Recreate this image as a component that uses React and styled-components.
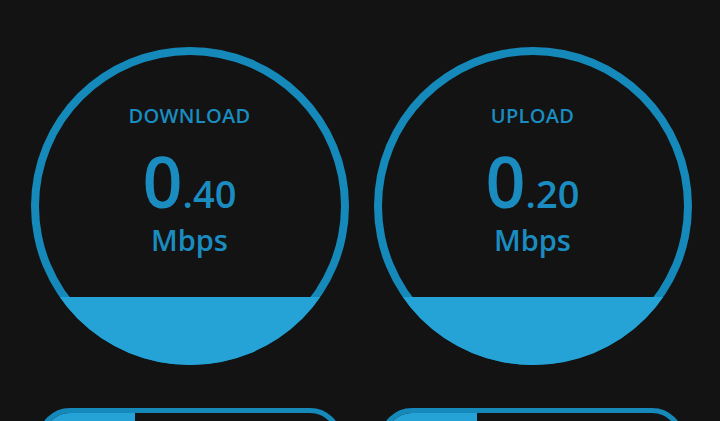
import styled, { createGlobalStyle } from "styled-components";

const GlobalStyle = createGlobalStyle`
  html, body {
    margin: 0;
    padding: 0;
    background: #131313;
  }
  body {
    font-family: "Open Sans", "Noto Sans", sans-serif;
    overflow: hidden;
  }
`;

const Page = styled.div`
  width: 720px;
  height: 421px;
  display: flex;
  flex-direction: column;
  align-items: center;
  gap: 43px;
  padding-top: 47px;
  box-sizing: border-box;
  overflow: hidden;
`;

const Row = styled.div`
  display: flex;
  gap: 25px;
  padding-left: 2px;
`;

const Gauge = styled.div`
  position: relative;
  width: 318px;
  height: 318px;
  border-radius: 50%;
  box-shadow: inset 0 0 0 8px #1689bb;
  overflow: hidden;
  display: flex;
  flex-direction: column;
  align-items: center;
`;

const Fill = styled.div`
  position: absolute;
  left: 0;
  right: 0;
  bottom: 0;
  background: #25a3d7;
`;

const Label = styled.div`
  margin-top: 57px;
  font-size: 20px;
  font-weight: 600;
  line-height: 24px;
  letter-spacing: 0.3px;
  color: #1a8cc0;
`;

const Value = styled.div`
  margin-top: 16px;
  height: 74px;
  display: flex;
  align-items: baseline;
  color: #1a8cc0;
  font-weight: 600;
  line-height: 74px;
`;

const Whole = styled.span`
  font-size: 70px;
`;

const Fraction = styled.span`
  font-size: 38px;
`;

const Unit = styled.div`
  margin-top: 4px;
  font-size: 29px;
  font-weight: 600;
  line-height: 36px;
  color: #1a8cc0;
`;

const Cards = styled.div`
  display: flex;
  gap: 38px;
  padding-left: 2px;
`;

const Card = styled.div`
  position: relative;
  width: 304px;
  height: 80px;
  box-sizing: border-box;
  border: 5px solid #1689bb;
  border-radius: 32px;
  background: #131313;
  overflow: hidden;
`;

const CardFill = styled.div`
  height: 100%;
  background: #25a3d7;
`;

const gauges = [
  { label: "DOWNLOAD", whole: "0", fraction: ".40", fill: 68 },
  { label: "UPLOAD", whole: "0", fraction: ".20", fill: 68 },
];

export default function App() {
  return (
    <>
      <GlobalStyle />
      <Page>
        <Row>
          {gauges.map((g) => (
            <Gauge key={g.label}>
              <Fill style={{ height: g.fill }} />
              <Label>{g.label}</Label>
              <Value>
                <Whole>{g.whole}</Whole>
                <Fraction>{g.fraction}</Fraction>
              </Value>
              <Unit>Mbps</Unit>
            </Gauge>
          ))}
        </Row>
        <Cards>
          {gauges.map((g) => (
            <Card key={g.label}>
              <CardFill style={{ width: 92 }} />
            </Card>
          ))}
        </Cards>
      </Page>
    </>
  );
}
